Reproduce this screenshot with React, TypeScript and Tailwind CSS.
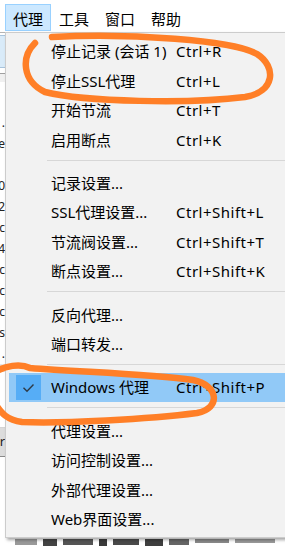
import React from 'react';

type Item = { label: string; shortcut?: string; checked?: boolean };
type Entry = Item | 'sep';

const ENTRIES: Entry[] = [
  { label: '停止记录 (会话 1)', shortcut: 'Ctrl+R' },
  { label: '停止SSL代理', shortcut: 'Ctrl+L' },
  { label: '开始节流', shortcut: 'Ctrl+T' },
  { label: '启用断点', shortcut: 'Ctrl+K' },
  'sep',
  { label: '记录设置...' },
  { label: 'SSL代理设置...', shortcut: 'Ctrl+Shift+L' },
  { label: '节流阀设置...', shortcut: 'Ctrl+Shift+T' },
  { label: '断点设置...', shortcut: 'Ctrl+Shift+K' },
  'sep',
  { label: '反向代理...' },
  { label: '端口转发...' },
  'sep',
  { label: 'Windows 代理', shortcut: 'Ctrl+Shift+P', checked: true },
  'sep',
  { label: '代理设置...' },
  { label: '访问控制设置...' },
  { label: '外部代理设置...' },
  { label: 'Web界面设置...' },
];

const MENUBAR = ['代理', '工具', '窗口', '帮助'];

// clipped text fragments of the window behind the menu
const BEHIND = ['1.', 'e', '', '0', '2', 'c', '4', 'c', 'c', 'c', 's', '.'];

const font = { fontFamily: '"Noto Sans", "Noto Sans CJK SC", sans-serif' };

const MenuRow: React.FC<{ item: Item }> = ({ item }) => (
  <div className={`flex items-center h-[29.4px] ${item.checked ? 'bg-[#91c9f7]' : ''}`}>
    <div className="w-[42px] h-full flex items-center pl-[7px]">
      {item.checked && (
        <div className="w-[25px] h-[25px] bg-[#56adf6] flex items-center justify-center">
          <svg width="13" height="10" viewBox="0 0 13 10">
            <path d="M1.5 4.8 L5 8.2 L11.5 1.5" fill="none" stroke="#2f3a45" strokeWidth="1.4" />
          </svg>
        </div>
      )}
    </div>
    <span className="w-[125px] text-[15px] text-black whitespace-nowrap">{item.label}</span>
    {item.shortcut && (
      <span className="text-[15px] text-black tracking-[0.5px] whitespace-nowrap">{item.shortcut}</span>
    )}
  </div>
);

export default function App() {
  return (
    <div className="relative w-[285px] h-[546px] overflow-hidden bg-white" style={font}>
      {/* menu bar */}
      <div className="flex h-[33px] pl-[5px] pt-[4px] bg-white border-b border-[#b4b4b4]">
        {MENUBAR.map((m, i) => (
          <div
            key={m}
            className={`w-[46px] h-[27px] flex items-center justify-center pt-[3px] text-[15px] text-black border ${
              i === 0 ? 'bg-[#cce8ff] border-[#99d1ff]' : 'border-transparent'
            }`}
          >
            {m}
          </div>
        ))}
      </div>

      {/* window content behind the popup */}
      <div className="flex flex-col w-[5px] h-[513px] overflow-hidden">
        <div className="h-[2px]" />
        <div className="h-[33px] bg-[#d9ebf9] border-y border-[#a9c4dc]" />
        <div className="h-[5px]" />
        <div className="h-px bg-[#a0a0a0]" />
        <div className="h-[8px] bg-[#f0f0f0]" />
        <div className="h-[30px]" />
        {BEHIND.map((t, i) => (
          <div key={i} className="h-[21px] flex items-center justify-end text-[12px] text-[#222] leading-none whitespace-nowrap">
            {t}
          </div>
        ))}
        <div className="h-[8px] bg-[#e6e6e6]" />
        <div className="h-[55px]" />
        <div className="h-px bg-[#d4d4d4]" />
        <div className="h-[29px] bg-[#dcdcdc] border-b border-[#8a8a8a] flex items-center justify-end text-[13px] text-[#222]">
          r
        </div>
      </div>

      {/* blurry text of the window below the popup */}
      <div className="absolute left-[15px] top-[539px] flex items-start gap-[6px] blur-[0.6px]">
        <div className="w-[22px] h-[6px] bg-[#9a9a9a]" />
        <div className="w-[14px] h-[7px] bg-[#444]" />
        <div className="w-[30px] h-[6px] bg-[#555]" />
        <div className="w-[8px] h-[7px] bg-[#3a3a3a]" />
        <div className="w-[26px] h-[6px] bg-[#4a4a4a]" />
        <div className="w-[18px] h-[7px] bg-[#3f3f3f]" />
        <div className="w-[20px] h-[6px] bg-[#666]" />
        <div className="w-[34px] h-[4px] bg-[#8a8a8a]" />
        <div className="w-[40px] h-[4px] bg-[#9a9a9a]" />
      </div>

      {/* popup menu */}
      <div className="absolute left-[5px] top-[32px] w-[290px] h-[506px] bg-[#f2f2f2] border border-[#cccccc] pt-[4px] px-[3px] shadow-[2px_2px_3px_rgba(0,0,0,0.35)]">
        {ENTRIES.map((e, i) =>
          e === 'sep' ? (
            <div key={i} className="h-[14px] pt-[5px] pl-[38px]">
              <div className="h-px bg-[#d7d7d7]" />
            </div>
          ) : (
            <MenuRow key={i} item={e} />
          )
        )}
      </div>

      {/* hand-drawn annotations */}
      <svg className="absolute inset-0 pointer-events-none" width="285" height="546" viewBox="0 0 285 546">
        <g fill="none" stroke="#ff7f27" strokeWidth="6.5" strokeLinecap="round" strokeLinejoin="round">
          <path d="M35 43 C21 57, 22 81, 45 92 C85 102, 190 104, 245 97 C275 92, 277 67, 257 54 C233 40, 130 33, 52 37" />
          <path d="M-5 372 C5 366, 20 363, 30 368 C80 372, 150 374, 193 380 C218 385, 222 408, 197 413 C150 419, 60 424, 22 422 C6 420, 1 412, -4 405" />
        </g>
      </svg>
    </div>
  );
}
